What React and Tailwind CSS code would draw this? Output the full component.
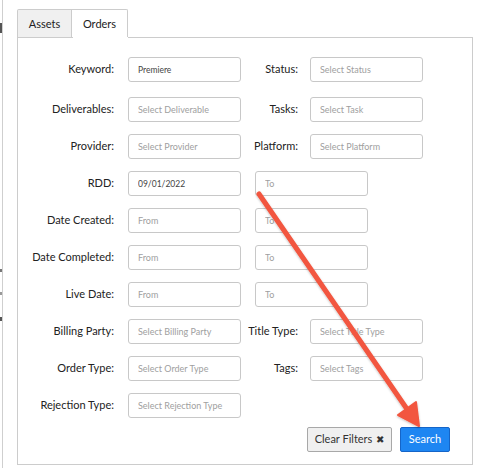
import React from 'react';

// Orders filter panel with a red annotation arrow pointing at Search

const rows = [
  { label: 'Keyword:', value: 'Premiere', right: { label: 'Status:', ph: 'Select Status' } },
  { label: 'Deliverables:', ph: 'Select Deliverable', right: { label: 'Tasks:', ph: 'Select Task' } },
  { label: 'Provider:', ph: 'Select Provider', right: { label: 'Platform:', ph: 'Select Platform' } },
  { label: 'RDD:', value: '09/01/2022', to: true },
  { label: 'Date Created:', ph: 'From', to: true },
  { label: 'Date Completed:', ph: 'From', to: true },
  { label: 'Live Date:', ph: 'From', to: true },
  { label: 'Billing Party:', ph: 'Select Billing Party', right: { label: 'Title Type:', ph: 'Select Title Type' } },
  { label: 'Order Type:', ph: 'Select Order Type', right: { label: 'Tags:', ph: 'Select Tags' } },
  { label: 'Rejection Type:', ph: 'Select Rejection Type' },
];

function Field({ value, ph }) {
  return (
    <input
      readOnly
      defaultValue={value}
      placeholder={ph}
      className="w-[113px] h-[25px] shrink-0 rounded-[3px] border border-[#c8c8c8] bg-white pl-[9px] text-[8.5px] text-[#444] placeholder:text-[9px] placeholder:text-[#a0a0a0] outline-none"
    />
  );
}

export default function App() {
  return (
    <div
      className="relative w-[481px] h-[468px] overflow-hidden bg-white flex"
      style={{ fontFamily: 'Lato, "Open Sans", sans-serif' }}
    >
      {/* edge of the page behind */}
      <div className="w-[3px] h-full border-r border-[#cfcfcf] flex flex-col shrink-0">
        <div className="mt-[23px] h-[10px] bg-[#555]" />
        <div className="mt-[236px] h-[3px] bg-[#777]" />
        <div className="mt-[20px] h-[3px] bg-[#999]" />
        <div className="mt-[22px] h-[4px] bg-[#555]" />
      </div>

      <div className="ml-[14px] pt-[9px] flex flex-col">
        {/* Tabs */}
        <div className="flex h-[29px] text-[11px] text-[#222]">
          <div className="w-[55px] border border-b-0 border-[#cccccc] bg-[#f0f0f0] rounded-tl-[2px] flex items-center justify-center">
            Assets
          </div>
          <div className="w-[56px] border border-l-0 border-b-0 border-[#cccccc] bg-white rounded-tr-[2px] flex items-center justify-center pt-[1px]">
            Orders
          </div>
        </div>

        {/* Panel */}
        <div className="relative -mt-px w-[456px] h-[428px] border border-[#cccccc] bg-white flex flex-col">
          <div className="absolute top-[-1px] left-[55px] w-[55px] h-px bg-white" />
          <div className="flex flex-col gap-[12px] pt-[19px] text-[11px] text-[#222]">
            {rows.map((r, i) => (
              <div key={r.label} className={`flex items-center h-[25px] ${i === 0 ? 'mb-[3px]' : ''}`}>
                <div className="w-[97px] pr-[1px] text-right shrink-0 whitespace-nowrap">{r.label}</div>
                <div className="w-[13px] shrink-0" />
                <Field value={r.value} ph={r.ph} />
                {r.to && (
                  <>
                    <div className="w-[14px] shrink-0" />
                    <Field ph="To" />
                  </>
                )}
                {r.right && (
                  <>
                    <div className="w-[57px] shrink-0 text-right whitespace-nowrap">{r.right.label}</div>
                    <div className="w-[12px] shrink-0" />
                    <Field ph={r.right.ph} />
                  </>
                )}
              </div>
            ))}
          </div>

          <div className="flex justify-end gap-[8px] pr-[22px] mt-[9px] text-[11px]">
            <button className="w-[85px] h-[25px] rounded-[2px] border border-[#a8a8a8] bg-[#f0f0f0] text-[#333] flex items-center justify-center gap-[4px]">
              Clear Filters <span className="text-[10px]">✖</span>
            </button>
            <button className="w-[50px] h-[25px] rounded-[2px] border border-[#1565c8] bg-[#1e86f2] text-white flex items-center justify-center">
              Search
            </button>
          </div>
        </div>
      </div>

      {/* annotation arrow */}
      <svg className="absolute inset-0 pointer-events-none" width="481" height="468" viewBox="0 0 481 468">
        <defs>
          <filter id="sh" x="-10%" y="-10%" width="120%" height="120%">
            <feDropShadow dx="0" dy="1" stdDeviation="1" floodColor="#000" floodOpacity="0.25" />
          </filter>
        </defs>
        <g filter="url(#sh)" fill="#f2563f" stroke="#f2563f">
          <line x1="259" y1="194" x2="409" y2="412" strokeWidth="5" strokeLinecap="round" />
          <polygon points="419,426 398,415 416,402" strokeWidth="2" strokeLinejoin="round" />
        </g>
      </svg>
    </div>
  );
}
